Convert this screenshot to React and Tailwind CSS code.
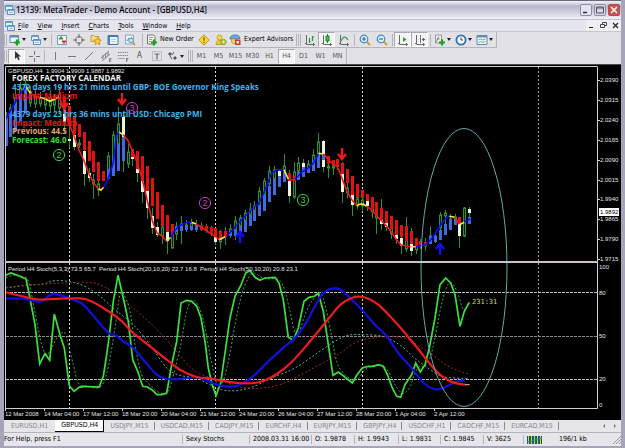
import React from "react";

const UI = "font-['DejaVu_Sans_Condensed','Noto_Sans',sans-serif]";

/* ---------- chart data ---------- */

const barX = (i) => 5.6 + 4.88 * i;

// index, top, bottom, tone (b = rising, r = falling)
const HISTOGRAM = [
  [0, 119, 146, "b"], [1, 111, 137, "b"], [2, 102, 131, "b"], [3, 94, 121, "b"], [4, 89, 113, "b"],
  [5, 91, 100, "b"], [12, 99, 114, "r"], [13, 106, 126, "r"], [14, 116, 134, "r"], [15, 124, 137, "r"],
  [16, 132, 150, "r"], [17, 141, 161, "r"], [18, 151, 172, "r"], [19, 162, 181, "r"], [20, 171, 181, "r"],
  [21, 169, 179, "b"], [22, 157, 176, "b"], [23, 144, 171, "b"], [24, 137, 161, "b"], [26, 149, 157, "r"],
  [27, 151, 169, "r"], [28, 156, 181, "r"], [29, 166, 191, "r"], [30, 178, 206, "r"], [31, 192, 219, "r"],
  [32, 205, 226, "r"], [33, 215, 232, "r"], [34, 224, 236, "r"], [35, 226, 232, "b"], [36, 224, 231, "b"],
  [37, 225, 230, "b"], [38, 226, 230, "b"], [39, 225, 230, "b"], [40, 226, 230, "r"], [41, 226, 231, "r"],
  [42, 227, 234, "r"], [43, 228, 237, "r"], [44, 231, 239, "r"], [45, 231, 237, "r"], [46, 231, 236, "b"],
  [47, 230, 236, "b"], [48, 226, 234, "b"], [49, 220, 232, "b"], [50, 215, 226, "b"], [51, 210, 221, "b"],
  [52, 205, 216, "b"], [53, 195, 211, "b"], [54, 186, 202, "b"], [55, 179, 195, "b"], [56, 176, 187, "b"],
  [57, 172, 182, "b"], [58, 173, 181, "r"], [59, 176, 181, "r"], [60, 172, 180, "b"], [61, 167, 177, "b"],
  [62, 167, 173, "b"], [63, 160, 171, "b"], [64, 154, 168, "b"], [65, 154, 160, "b"], [66, 156, 164, "r"],
  [67, 160, 166, "r"], [68, 159, 167, "r"], [69, 163, 174, "r"], [70, 169, 183, "r"], [71, 176, 195, "r"],
  [72, 184, 198, "r"], [73, 190, 198, "r"], [74, 194, 201, "r"], [75, 197, 209, "r"], [76, 202, 215, "r"],
  [77, 208, 220, "r"], [78, 211, 223, "r"], [79, 216, 229, "r"], [80, 220, 235, "r"], [81, 225, 237, "r"],
  [82, 226, 241, "r"], [83, 231, 244, "r"], [84, 238, 246, "r"], [85, 241, 246, "r"], [86, 242, 246, "r"],
  [87, 236, 244, "b"], [88, 236, 242, "b"], [89, 230, 240, "b"], [90, 224, 235, "b"], [91, 219, 230, "b"],
  [92, 217, 225, "b"], [93, 217, 224, "r"], [95, 217, 224, "b"],
];

// index, high, body top, body bottom, low, kind (u = hollow rising, d = filled falling)
const CANDLES = [
  [0, 112, 116, 124, 130, "u"], [1, 104, 108, 116, 122, "u"], [2, 90, 98, 106, 110, "u"], [3, 82, 88, 98, 104, "u"],
  [4, 80, 84, 92, 98, "u"], [5, 86, 94, 103, 107, "u"], [6, 90, 96, 104, 108, "u"], [7, 92, 98, 104, 107, "u"],
  [8, 94, 98, 105, 110, "u"], [9, 90, 98, 106, 113, "u"], [10, 94, 100, 105, 111, "u"], [11, 88, 94, 108, 114, "u"],
  [12, 96, 107, 122, 134, "d"], [13, 112, 139, 141, 148, "d"], [14, 130, 135, 147, 150, "d"], [15, 139, 143, 145, 148, "u"],
  [16, 146, 151, 174, 186, "d"], [17, 168, 173, 178, 182, "d"], [18, 174, 180, 184, 199, "u"], [19, 178, 184, 190, 196, "u"],
  [21, 152, 156, 172, 176, "u"], [22, 131, 135, 158, 161, "u"], [23, 107, 124, 144, 148, "u"], [24, 112, 117, 141, 172, "d"],
  [25, 144, 152, 164, 168, "u"], [26, 150, 154, 159, 166, "d"], [27, 160, 168, 173, 182, "d"], [28, 172, 177, 192, 203, "d"],
  [29, 188, 191, 208, 219, "d"], [30, 208, 216, 228, 234, "d"], [31, 222, 227, 235, 237, "d"], [32, 222, 227, 236, 244, "u"],
  [33, 229, 232, 241, 254, "d"], [34, 228, 231, 248, 249, "u"], [35, 222, 228, 234, 240, "u"], [36, 216, 224, 228, 244, "u"],
  [37, 220, 225, 228, 232, "u"], [38, 219, 223, 227, 231, "u"], [39, 220, 225, 228, 232, "u"], [40, 222, 226, 229, 231, "u"],
  [41, 224, 227, 230, 233, "u"], [42, 226, 229, 232, 236, "u"], [43, 230, 234, 242, 245, "d"], [44, 230, 234, 242, 249, "u"],
  [45, 227, 232, 236, 245, "u"], [46, 224, 229, 234, 238, "u"], [47, 216, 221, 230, 240, "u"], [48, 215, 218, 226, 236, "u"],
  [49, 210, 213, 221, 224, "u"], [50, 203, 209, 215, 220, "u"], [51, 201, 206, 211, 214, "u"], [52, 187, 191, 206, 208, "u"],
  [53, 178, 181, 194, 200, "u"], [54, 166, 171, 184, 188, "u"], [55, 166, 170, 179, 184, "u"], [56, 169, 171, 176, 180, "d"],
  [57, 154, 166, 171, 176, "u"], [58, 170, 179, 196, 203, "d"], [59, 162, 172, 197, 199, "u"], [60, 157, 163, 171, 174, "u"],
  [61, 159, 163, 168, 175, "d"], [62, 160, 164, 168, 172, "u"], [63, 149, 155, 166, 170, "u"], [64, 133, 142, 156, 164, "u"],
  [65, 140, 141, 167, 172, "d"], [66, 164, 166, 168, 178, "u"], [67, 163, 166, 168, 175, "u"], [68, 159, 163, 166, 170, "u"],
  [69, 162, 174, 192, 203, "d"], [70, 182, 188, 193, 198, "u"], [71, 192, 195, 205, 216, "d"], [72, 196, 199, 206, 209, "u"],
  [73, 196, 200, 206, 210, "u"], [74, 196, 200, 206, 211, "d"], [75, 202, 207, 212, 218, "u"], [76, 208, 213, 218, 234, "u"],
  [77, 199, 217, 224, 230, "d"], [78, 218, 223, 227, 231, "d"], [79, 224, 228, 234, 239, "u"], [80, 228, 232, 239, 244, "d"],
  [81, 236, 238, 246, 254, "d"], [82, 217, 240, 249, 252, "u"], [83, 228, 241, 251, 256, "d"], [84, 242, 245, 250, 254, "u"],
  [85, 239, 243, 246, 249, "u"], [86, 238, 243, 246, 251, "u"], [87, 226, 236, 240, 244, "u"], [88, 232, 236, 240, 243, "u"],
  [89, 212, 215, 228, 234, "u"], [90, 210, 213, 216, 226, "u"], [91, 214, 219, 223, 228, "u"], [92, 214, 217, 220, 224, "u"],
  [93, 218, 224, 236, 248, "d"], [94, 207, 208, 236, 237, "u"], [95, 207, 209, 213, 222, "d"],
];

// Curve samples are stored in thirds of a pixel relative to their pane.
const line = (points, originY) =>
  points.map(([x, y], i) => `${i ? "L" : "M"}${(x / 3).toFixed(1)} ${(originY + y / 3).toFixed(1)}`).join("");

const curve = (points, originY) => {
  const p = points.map(([x, y]) => [x / 3, originY + y / 3]);
  let d = `M${p[0][0].toFixed(1)} ${p[0][1].toFixed(1)}`;
  for (let i = 0; i < p.length - 1; i++) {
    const a = p[Math.max(i - 1, 0)], b = p[i], c = p[i + 1], e = p[Math.min(i + 2, p.length - 1)];
    const n = [b[0] + (c[0] - a[0]) / 6, b[1] + (c[1] - a[1]) / 6, c[0] - (e[0] - b[0]) / 6, c[1] - (e[1] - b[1]) / 6, c[0], c[1]];
    d += `C${n.map((v) => v.toFixed(1)).join(" ")}`;
  }
  return d;
};

const BLUE = "#0a0af5", RED = "#f01818", YELLOW = "#f5ee30";

const AVERAGE = [
  [BLUE, [[17, 165], [40, 125], [60, 90], [78, 70]]],
  [YELLOW, [[78, 70], [92, 88]]],
  [RED, [[92, 88], [106, 97], [120, 100]]],
  [YELLOW, [[120, 100], [135, 104], [150, 112], [165, 104], [178, 100]]],
  [RED, [[178, 100], [190, 130], [207, 180], [222, 215], [237, 258], [252, 290], [267, 330], [281, 358], [296, 375]]],
  [YELLOW, [[296, 375], [303, 378], [311, 370]]],
  [BLUE, [[311, 370], [325, 345], [340, 295], [350, 212], [358, 205]]],
  [YELLOW, [[358, 205], [370, 212]]],
  [RED, [[370, 212], [384, 230], [398, 262], [413, 300], [428, 350], [442, 410], [457, 470], [471, 507], [485, 515], [500, 532]]],
  [YELLOW, [[500, 532], [512, 520]]],
  [BLUE, [[512, 520], [522, 503], [535, 487], [560, 475], [575, 475]]],
  [YELLOW, [[575, 475], [588, 480]]],
  [RED, [[588, 480], [615, 497], [645, 517], [658, 527]]],
  [YELLOW, [[658, 527], [675, 518]]],
  [BLUE, [[680, 516], [705, 490], [730, 462], [755, 435], [775, 420], [790, 390], [800, 365], [815, 327], [830, 317], [852, 317]]],
  [YELLOW, [[852, 317], [865, 345]]],
  [RED, [[865, 347], [885, 348]]],
  [BLUE, [[885, 346], [905, 325], [925, 312], [940, 298], [955, 270]]],
  [YELLOW, [[955, 268], [970, 270]]],
  [RED, [[970, 270], [990, 292], [1012, 308], [1027, 345], [1042, 385], [1056, 408], [1071, 425]]],
  [YELLOW, [[1071, 425], [1078, 421], [1090, 420], [1100, 427]]],
  [RED, [[1100, 427], [1115, 438], [1130, 455], [1159, 485], [1174, 505], [1188, 525], [1203, 543], [1232, 548]]],
  [YELLOW, [[1232, 548], [1247, 548]]],
  [BLUE, [[1247, 548], [1263, 545], [1275, 543], [1290, 530], [1305, 510], [1320, 485], [1335, 465], [1348, 457]]],
  [YELLOW, [[1348, 457], [1364, 460]]],
  [RED, [[1364, 460], [1378, 480]]],
  [YELLOW, [[1378, 482], [1393, 475]]],
  [BLUE, [[1393, 473], [1411, 465]]],
];

const STOCH_FAST = [[17, 52], [33, 45], [60, 55], [78, 63], [85, 95], [105, 200], [119, 318], [135, 287], [149, 307], [163, 168], [180, 230], [193, 270], [208, 383], [222, 400], [237, 388], [252, 385], [297, 387], [310, 355], [320, 290], [327, 240], [340, 130], [354, 52], [370, 120], [385, 190], [398, 305], [413, 340], [428, 385], [442, 387], [455, 395], [471, 410], [485, 410], [500, 405], [515, 320], [530, 250], [543, 135], [560, 127], [575, 130], [590, 145], [603, 180], [615, 250], [625, 330], [635, 375], [648, 413], [662, 375], [677, 270], [690, 180], [705, 115], [722, 83], [737, 45], [750, 38], [765, 58], [780, 67], [795, 60], [825, 58], [837, 75], [850, 125], [865, 238], [880, 247], [895, 210], [912, 130], [927, 118], [943, 115], [955, 105], [970, 160], [985, 260], [999, 352], [1015, 342], [1028, 352], [1057, 375], [1070, 352], [1087, 330], [1105, 325], [1120, 325], [1135, 320], [1150, 325], [1163, 352], [1177, 390], [1190, 415], [1202, 418], [1215, 380], [1235, 350], [1247, 315], [1261, 342], [1275, 320], [1288, 270], [1305, 180], [1320, 80], [1337, 60], [1352, 75], [1365, 110], [1380, 205], [1393, 160], [1408, 133]];

const STOCH_FAST_SIGNAL = [[17, 60], [40, 52], [60, 55], [85, 70], [110, 190], [125, 260], [140, 290], [155, 270], [170, 240], [185, 225], [195, 225], [205, 260], [220, 320], [235, 375], [260, 385], [300, 387], [322, 340], [345, 210], [360, 110], [372, 112], [390, 160], [405, 260], [425, 350], [445, 375], [470, 400], [500, 405], [515, 370], [540, 270], [560, 160], [575, 130], [590, 135], [610, 185], [630, 290], [648, 370], [665, 380], [685, 310], [705, 200], [725, 110], [745, 60], [760, 45], [795, 62], [830, 62], [850, 85], [870, 160], [885, 225], [900, 215], [915, 170], [935, 130], [960, 105], [975, 140], [990, 210], [1010, 310], [1030, 345], [1055, 365], [1075, 362], [1095, 335], [1125, 322], [1145, 322], [1165, 340], [1185, 380], [1205, 405], [1220, 400], [1232, 382], [1245, 345], [1260, 325], [1275, 325], [1290, 300], [1305, 240], [1320, 160], [1335, 100], [1348, 75], [1360, 80], [1375, 110], [1390, 155], [1408, 135]];

const STOCH_MID = [[17, 122], [70, 122], [105, 130], [125, 130], [145, 115], [163, 107], [190, 115], [220, 125], [250, 140], [290, 185], [325, 225], [345, 232], [370, 250], [400, 270], [430, 305], [470, 350], [500, 363], [550, 362], [590, 357], [620, 367], [645, 378], [675, 385], [705, 385], [735, 372], [765, 350], [805, 310], [855, 265], [885, 240], [915, 200], [945, 145], [965, 110], [985, 95], [1003, 91], [1020, 94], [1045, 115], [1085, 155], [1125, 200], [1160, 235], [1195, 285], [1230, 325], [1250, 350], [1275, 378], [1305, 394], [1330, 390], [1360, 375], [1395, 365]];

const STOCH_MID_SIGNAL = [[17, 90], [80, 82], [130, 78], [165, 68], [215, 72], [260, 88], [300, 115], [345, 155], [400, 200], [450, 260], [500, 330], [540, 352], [590, 360], [625, 378], [665, 395], [705, 398], [755, 388], [815, 360], [885, 330], [945, 290], [1005, 250], [1045, 232], [1095, 230], [1155, 237], [1205, 265], [1240, 297], [1270, 320], [1310, 348], [1340, 358], [1408, 362]];

const STOCH_SLOW = [[17, 103], [60, 113], [110, 124], [160, 123], [240, 121], [270, 128], [310, 150], [360, 185], [400, 225], [450, 265], [500, 305], [540, 335], [590, 357], [630, 361], [665, 368], [715, 375], [765, 375], [795, 367], [835, 345], [875, 312], [915, 268], [955, 220], [995, 170], [1025, 137], [1055, 120], [1077, 116], [1105, 122], [1135, 140], [1175, 180], [1215, 225], [1260, 280], [1290, 318], [1320, 350], [1350, 370], [1380, 378], [1396, 380]];

const STOCH_SLOW_SIGNAL = [[17, 88], [100, 80], [200, 75], [270, 73], [310, 85], [350, 110], [400, 150], [450, 195], [500, 245], [550, 305], [590, 342], [630, 358], [675, 372], [725, 388], [785, 390], [845, 378], [925, 338], [1005, 295], [1065, 255], [1125, 238], [1175, 235], [1215, 240], [1240, 254], [1290, 285], [1340, 322], [1380, 340], [1408, 348]];

const PRICES = ["2.0390", "2.0315", "2.0240", "2.0165", "2.0090", "2.0015", "1.9940", "1.9865", "1.9790", "1.9715"];
const DATES = ["12 Mar 2008", "14 Mar 04:00", "17 Mar 12:00", "18 Mar 20:00", "20 Mar 04:00", "21 Mar 12:00", "24 Mar 20:00", "26 Mar 04:00", "27 Mar 12:00", "28 Mar 20:00", "1 Apr 04:00", "2 Apr 12:00"];

const EVENTS = [
  ["FOREX FACTORY CALENDAR", 81, "#f4f4f4"],
  ["4379 days 19 hrs 21 mins until GBP: BOE Governor King Speaks", 90, "#3fb4ea"],
  ["Impact: Medium", 99, "#e01818"],
  ["4379 days 23 hrs 36 mins until USD: Chicago PMI", 117, "#3fb4ea"],
  ["Impact: Medium", 126, "#e01818"],
  ["Previous: 44.5", 134, "#e0a070"],
  ["Forecast: 46.0", 143, "#28e028"],
];

const WAVES = [["2", 59, 155, "#3ccf4c"], ["3", 132, 108, "#c838c8"], ["2", 205, 203, "#c838c8"], ["3", 303, 200, "#3ccf4c"]];

function Marker({ x, y, up, color }) {
  const s = up ? -1 : 1;
  return (
    <path
      d={`M${x} ${y - 6 * s}V${y + 4 * s}M${x - 4} ${y}L${x} ${y + 5 * s}L${x + 4} ${y}`}
      stroke={color} strokeWidth="2.4" fill="none"
    />
  );
}

function Chart() {
  return (
    <svg viewBox="4 64 617 356" className="block h-auto w-full bg-black font-['Liberation_Sans',sans-serif]" role="img" aria-label="GBPUSD H4 chart">
      <rect x="4" y="64" width="617" height="1" fill="#4a4a4a" />
      <g stroke="#d8d8d8" strokeDasharray="2 2">
        <path d="M69.5 67V408M215.5 67V408M362.5 67V408" />
        <path d="M538.5 67V408" stroke="#a0a0a0" />
        <path d="M6 292.5H597M6 379.5H597" strokeDasharray="3 1" stroke="#c0c0c0" />
        <path d="M6 336.5H597" strokeDasharray="3 1" stroke="#8a8a8a" />
      </g>

      <text x="8" y="73" fontSize="6" fill="#e4e4e4">GBPUSD,H4&nbsp; 1.9904 1.9909 1.9887 1.9892</text>

      {CANDLES.map(([i, hi, top, bot, lo, kind]) => {
        const x = Math.round(barX(i));
        return (
          <g key={i}>
            <path d={`M${x + 0.5} ${hi}V${lo}`} stroke="#2f8f35" />
            {kind === "u"
              ? <rect x={x - 0.5} y={top} width="2" height={bot - top} fill="#0a200a" stroke="#2f8f35" />
              : <rect x={x - 1} y={top} width="3" height={bot - top} fill="#e2f8dc" />}
          </g>
        );
      })}
      {HISTOGRAM.map(([i, top, bot, tone]) => (
        <rect key={i} x={Math.round(barX(i)) - 1} y={top} width="3" height={bot - top} fill={tone === "b" ? "#3f6ae0" : "#e01212"} />
      ))}
      <g fill="none" strokeWidth="1.6">
        {AVERAGE.map(([color, pts], i) => <path key={i} d={line(pts, 64)} stroke={color} />)}
      </g>

      <Marker x={122} y={99} color="#f01818" />
      <Marker x={64} y={103} color="#f01818" />
      <Marker x={342} y={154} color="#f01818" />
      <Marker x={240} y={237} color="#1010f0" up />
      <Marker x={440} y={249} color="#1010f0" up />

      {EVENTS.map(([label, y, color], i) => (
        <text key={i} x="12" y={y} fontSize="8" fontWeight="700" fill={color} className="font-['Open_Sans',sans-serif]">{label}</text>
      ))}
      {WAVES.map(([n, x, y, color], i) => (
        <g key={i}>
          <circle cx={x} cy={y} r="5.6" fill="none" stroke={color} />
          <text x={x} y={y + 3} fontSize="9" textAnchor="middle" fill={color}>{n}</text>
        </g>
      ))}

      <g fill="none">
        <path d={curve(STOCH_MID_SIGNAL, 258)} stroke="#5fa9a4" strokeDasharray="2 2" />
        <path d={curve(STOCH_SLOW_SIGNAL, 258)} stroke="#a02525" strokeDasharray="2 2" />
        <path d={curve(STOCH_FAST_SIGNAL, 258)} stroke="#4f9f55" strokeDasharray="2 2" />
        <path d={line(STOCH_FAST, 258)} stroke="#3ce03c" strokeWidth="1.7" />
        <path d={curve(STOCH_MID, 258)} stroke="#1010e0" strokeWidth="2.2" />
        <path d={curve(STOCH_SLOW, 258)} stroke="#f01c1c" strokeWidth="2.2" />
        <path d="M465 384.7H469.500" stroke="#e8c0b0" />
        <ellipse cx="464" cy="267.500" rx="43" ry="139" stroke="#65aaa6" />
      </g>
      <text x="472" y="304" fontSize="7" fill="#d8d870" className="font-['DejaVu_Sans_Mono',monospace]">231:31</text>
      <text x="8" y="271" fontSize="6" fill="#e4e4e4">
        Period H4 Stoch(5,3,3) 73.5 65.7&nbsp; Period H4 Stoch(20,10,20) 22.7 16.8&nbsp; Period H4 Stoch(50,10,20) 20.8 23.1
      </text>

      <path d="M5.500 408V66.500H597.500V408.500H5.500" fill="none" stroke="#d0d0d0" />
      <path d="M5 262H598" stroke="#c9c3c9" strokeWidth="2" />

      <g fontSize="6" fill="#e4e4e4">
        {PRICES.map((p, i) => (
          <g key={p}>
            <path d={`M598 ${Math.round(80 + 19.9 * i) + 0.5}h2`} stroke="#d0d0d0" />
            <text x="600" y={Math.round(82 + 19.9 * i)}>{p}</text>
          </g>
        ))}
        <rect x="599" y="208" width="20" height="8" fill="#fff" />
        <text x="600" y="214" fill="#000">1.9892</text>
        <text x="599" y="269">100</text>
        <text x="599" y="295">80</text>
        <text x="599" y="338">50</text>
        <text x="599" y="381">20</text>
        <text x="599" y="407">0</text>
        {DATES.map((d, i) => (
          <g key={d}>
            <path d={`M${5.5 + 39 * i} 408v3`} stroke="#d0d0d0" />
            <text x={5 + 39 * i} y="416">{d}</text>
          </g>
        ))}
      </g>
    </svg>
  );
}

/* ---------- icons ---------- */

const Icon = ({ children }) => (
  <svg viewBox="0 0 12 12" className="size-3 shrink-0" fill="none" aria-hidden="true">{children}</svg>
);

const Plus = () => <path d="M8 5.500V11.500M5 8.500H11" stroke="#18a018" strokeWidth="2.200" />;

const WindowsIcon = () => (
  <Icon>
    <path d="M1.500 1.500h7v5h-7zM3.500 5.500h7v5h-7z" fill="#e6f2fb" stroke="#5c93be" />
    <path d="M1 2.500h8M3 6.500h8" stroke="#6ba3d0" />
    <path d="M5 8.500h4" stroke="#9cc" />
  </Icon>
);
const NewChartIcon = () => (
  <Icon><path d="M1 1.500h8.500v7H1z" fill="#eef6fc" stroke="#5a8ab0" /><path d="M1 2.500h8.500" stroke="#5a8ab0" strokeWidth="2" /><Plus /></Icon>
);
const MarketIcon = () => (
  <Icon>
    <path d="M1.500 1.500h9v9h-9z" fill="#f4fafd" stroke="#6f9dbd" />
    <path d="M3 5l2-2.500 2 2.500z" fill="#20a030" stroke="#20a030" />
    <path d="M6 7h4l-2 2.500z" fill="#d03020" stroke="#d03020" />
  </Icon>
);
const NavigatorIcon = () => (
  <Icon><circle cx="6" cy="6" r="3.500" stroke="#777" /><path d="M6 0v4M6 8v4M0 6h4M8 6h4" stroke="#666" /></Icon>
);
const StarIcon = () => (
  <Icon>
    <path d="M1 1.500h3l1 1h4v5H1z" fill="#f6dc7a" stroke="#b89430" strokeWidth=".8" />
    <path d="M7.500 3.500l1.200 2.400 2.700.3-2 1.800.6 2.800-2.500-1.400-2.500 1.400.6-2.800-2-1.800 2.700-.3z" fill="#fbd02c" stroke="#b8861c" strokeWidth=".7" />
  </Icon>
);
const TerminalIcon = () => (
  <Icon><path d="M1 1.500h10v9H1z" fill="#eef6fd" stroke="#3f7cb5" /><path d="M1 2h10M2 3v7" stroke="#3f7cb5" strokeWidth="1.800" /><path d="M4 5.500h5M4 7.500h5" stroke="#b6cfe4" /></Icon>
);
const TesterIcon = () => (
  <Icon>
    <path d="M1.500 1h8v9h-8z" fill="#e8f1f8" stroke="#8aa9c0" /><path d="M3 7l2-3 1 2 2-3" stroke="#5a90b8" />
    <circle cx="7" cy="6.500" r="2.300" fill="#cfe6f6" stroke="#5c93bb" /><path d="M8.700 8.500L11 11" stroke="#c8902c" strokeWidth="1.600" />
  </Icon>
);
const OrderIcon = () => (
  <Icon><path d="M1.500 1h6l1.500 1.500V10H1.500z" fill="#f5f5f0" stroke="#777" /><path d="M3 3.500h4M3 5.500h3M3 7.500h2" stroke="#999" /><Plus /></Icon>
);
const WarnIcon = () => (
  <Icon><path d="M6 .8L11.200 6 6 11.200.8 6z" fill="#fbd83c" stroke="#c09418" /><path d="M6 3.200v3.500M6 7.800v1.300" stroke="#6a4d08" strokeWidth="1.200" /></Icon>
);
const RobotIcon = () => (
  <Icon>
    <circle cx="4.500" cy="3.500" r="2.500" fill="#f8d648" stroke="#b8921c" strokeWidth=".8" />
    <path d="M1 10.500c0-3 1.500-4 3.500-4s3.500 1 3.500 4z" fill="#f0c82c" stroke="#b8921c" strokeWidth=".8" />
    <circle cx="8.500" cy="8" r="2.700" fill="#b8cc38" stroke="#7a9a20" strokeWidth=".8" /><circle cx="8.500" cy="8" r="1" fill="#f8f8d0" />
  </Icon>
);
const ExpertIcon = () => (
  <Icon>
    <path d="M1 5c0-3 2-4 5-4s5 1 5 3.500z" fill="#5fb0dc" stroke="#2f7aa8" strokeWidth=".8" />
    <path d="M2.500 5h6v3c0 2-5 2.500-6 0z" fill="#f6d060" stroke="#b8902c" strokeWidth=".7" />
    <path d="M6 5.500h5.500V11H6z" fill="#d83424" /><path d="M7.500 7h2.500v2.500H7.500z" fill="#fff" />
  </Icon>
);
const Axes = () => <path d="M2.500 1v9.500H11M1 9.500h2M9.500 9v3" stroke="#6a6a6a" />;
const BarsIcon = () => <Icon><Axes /><path d="M5.500 4v5M5 7.500h1.500M8.500 2v5M8.500 3h1.500" stroke="#2a9a35" strokeWidth="1.200" /></Icon>;
const CandlesIcon = () => <Icon><Axes /><path d="M6.500 0v9" stroke="#178a20" /><path d="M5 2h3v5H5z" fill="#3cc848" stroke="#178a20" /></Icon>;
const LineIcon = () => <Icon><Axes /><path d="M3 7c2-5 5-5 7-1" stroke="#3aa048" strokeWidth="1.200" /></Icon>;
const ZoomIcon = ({ plus }) => (
  <Icon>
    <path d="M7.500 7.500L11 11" stroke="#d0a02c" strokeWidth="2" />
    <circle cx="5" cy="5" r="3.800" fill="#dcefff" stroke="#4488c4" strokeWidth="1.200" />
    <path d={plus ? "M3 5h4M5 3v4" : "M3 5h4"} stroke="#2a6cb0" strokeWidth="1.200" />
  </Icon>
);
const ScrollIcon = () => <Icon><Axes /><path d="M6 3l3.500 2.500L6 8z" fill="#22a035" /></Icon>;
const ShiftIcon = () => <Icon><Axes /><path d="M6.500 1v8" stroke="#777" /><path d="M8 5.500h3M9.500 4v3" stroke="#22803a" strokeWidth="1.200" /></Icon>;
const IndicatorIcon = () => (
  <Icon><path d="M1.500 1h6v8h-6z" fill="#ececec" stroke="#999" /><path d="M5 3c-2 0-1.500 5-3 5M3 5h2.500" stroke="#666" strokeWidth=".8" /><Plus /></Icon>
);
const ClockIcon = () => <Icon><circle cx="6" cy="6" r="4.600" fill="#f4faff" stroke="#2a72b8" strokeWidth="1.800" /><path d="M6 3.500V6h2" stroke="#345" /></Icon>;
const TemplateIcon = () => <Icon><path d="M1 1.500h10v9H1z" fill="#f2f8fc" stroke="#5a8fb8" /><path d="M1 2.500h10" stroke="#5a8fb8" strokeWidth="2" /><path d="M2.500 6l2-1 2 1 3-1M2.500 8.500l2-1 2 1 3-1" stroke="#7a9a7a" strokeWidth=".9" /></Icon>;

const CursorIcon = () => <Icon><path d="M4 1v8l2-1.800 1.300 3 1.400-.6-1.300-3H10z" fill="#333" /></Icon>;
const CrosshairIcon = () => <Icon><path d="M6.500 1v4M6.500 8v4M1 6.500h4M8 6.500h4" stroke="#777" /></Icon>;
const VLineIcon = () => <Icon><path d="M6.500 2v8" stroke="#777" /></Icon>;
const HLineIcon = () => <Icon><path d="M2 6.500h8" stroke="#777" /></Icon>;
const TrendIcon = () => <Icon><path d="M2 10l8-8" stroke="#777" /></Icon>;
const ChannelIcon = () => <Icon><path d="M1 8l8-7M2 11l8-7M3 5v4M5.500 3v5M8 2v4" stroke="#777" strokeWidth=".9" /><path d="M11.500 8.500H9.500V12h2M9.500 10h1.500" stroke="#666" strokeWidth=".8" /></Icon>;
const FiboIcon = () => <Icon><path d="M1 2.500h10M1 5.500h10M1 8.500h7" stroke="#888" strokeDasharray="1.500 .7" /><path d="M11.500 8.500H9.500V12M9.500 10h1.500" stroke="#666" strokeWidth=".8" /></Icon>;
const LabelIcon = () => <Icon><path d="M1.500 1.500h9v9h-9z" stroke="#999" strokeDasharray="1 1" /><path d="M3.500 4h5M6 4v5.500" stroke="#666" strokeWidth="1.200" /></Icon>;
const ArrowsIcon = () => <Icon><path d="M1 4l2-2 2 2-2 2zM6 8l2-2 2 2-2 2z" fill="#555" /><path d="M3 6l2 3M7 2L5 5" stroke="#555" /></Icon>;

const Caret = () => (
  <svg viewBox="0 0 4 3" className="h-[3px] w-1 shrink-0" aria-hidden="true"><path d="M0 0h4L2 3z" fill="#222" /></svg>
);

/* ---------- window chrome ---------- */

function Tool({ label, width = "w-[17px]", pressed, caret, children }) {
  return (
    <button
      type="button" aria-label={label} aria-pressed={pressed}
      className={`flex h-[15px] shrink-0 items-center justify-center gap-px border ${width} ${pressed ? "border-[#a9a9b0] border-r-white border-b-white bg-[#f4f4f6]" : "border-transparent"}`}
    >
      {children}
      {caret && <Caret />}
    </button>
  );
}

const Divider = ({ width = "w-1" }) => (
  <span className={`flex h-3 shrink-0 justify-center ${width}`}><span className="w-px bg-[#b4b4bc]" /></span>
);
const Grip = () => <span className="h-3 w-[3px] shrink-0 border-x border-[#b4b4bc]" />;

const MENU = ["File", "View", "Insert", "Charts", "Tools", "Window", "Help"];
const FRAMES = ["M1", "M5", "M15", "M30", "H1", "H4", "D1", "W1", "MN"];
const TABS = ["EURUSD,H1", "GBPUSD,H4", "USDJPY,M15", "USDCAD,M15", "CADJPY,M15", "EURCHF,H4", "EURJPY,M15", "GBPJPY,H4", "USDCHF,H1", "CADCHF,M15", "EURCAD,M15"];

function TitleBar() {
  const frame = "flex size-3 items-center justify-center rounded-xs border";
  return (
    <header className="flex h-[19px] items-center border-t border-[#6b6a7c] bg-linear-to-b from-[#f4f4fa] via-[#b7b6cd] via-30% to-[#f0f0f6]">
      <WindowsIcon />
      <h1 className="flex-1 text-[8px] leading-3 font-medium whitespace-nowrap text-black font-['Noto_Sans',sans-serif]">13139: MetaTrader - Demo Account - [GBPUSD,H4]</h1>
      <div className="flex gap-0.5 pr-px">
        <button type="button" aria-label="Minimize" className={`${frame} border-[#8c8ca6] bg-[#e4e4ee]`}>
          <svg viewBox="0 0 10 10" className="size-2.5"><path d="M2 7.500h4" stroke="#333" strokeWidth="1.500" /></svg>
        </button>
        <button type="button" aria-label="Maximize" className={`${frame} border-[#8c8ca6] bg-[#d4d4e2]`}>
          <svg viewBox="0 0 10 10" className="size-2.5" fill="none"><path d="M1.500 2h7v6h-7zM1.500 3h7" stroke="#555566" /></svg>
        </button>
        <button type="button" aria-label="Close" className={`${frame} border-[#a05050] bg-[#d0504c]`}>
          <svg viewBox="0 0 10 10" className="size-2.5"><path d="M2 2l6 6M8 2L2 8" stroke="#fff" strokeWidth="1.500" /></svg>
        </button>
      </div>
    </header>
  );
}

function MenuBar() {
  return (
    <nav className="flex h-3 items-center border-t border-[#c2c2cc] bg-[#e4e5ef]">
      <WindowsIcon />
      <div className="flex flex-1 gap-[9px] pl-[2px]">
        {MENU.map((m) => (
          <button key={m} type="button" className="text-[7px] leading-[10px] text-black"><u>{m[0]}</u>{m.slice(1)}</button>
        ))}
      </div>
      <div className="flex gap-px">
        <button type="button" aria-label="Minimize chart" className="size-[11px] bg-[#f0f0f4]">
          <svg viewBox="0 0 11 11"><path d="M3 7.500h4" stroke="#222" /></svg>
        </button>
        <button type="button" aria-label="Restore chart" className="size-[11px] bg-[#f0f0f4]">
          <svg viewBox="0 0 11 11" fill="none"><path d="M4.500 4V2.500h4v3H7M2.500 4.500h4v3h-4z" stroke="#444" /></svg>
        </button>
        <button type="button" aria-label="Close chart" className="size-[11px] bg-[#f0f0f4]">
          <svg viewBox="0 0 11 11"><path d="M3 3l5 5M8 3L3 8" stroke="#222" strokeWidth="1.200" /></svg>
        </button>
      </div>
    </nav>
  );
}

function MainToolbar() {
  return (
    <div className="flex h-[17px] border-t border-[#c6c6cc]">
      <div className="flex items-center border-r border-b border-[#b4b4bc] pr-px">
        <Grip />
        <Tool label="New chart" width="w-[21px]" caret><NewChartIcon /></Tool>
        <Tool label="Profiles" width="w-[21px]" caret><WindowsIcon /></Tool>
        <Divider />
        <Tool label="Market watch"><MarketIcon /></Tool>
        <Tool label="Data window"><NavigatorIcon /></Tool>
        <Tool label="Navigator"><StarIcon /></Tool>
        <Tool label="Terminal"><TerminalIcon /></Tool>
        <Tool label="Strategy tester"><TesterIcon /></Tool>
        <Divider width="w-2" />
        <button type="button" className="flex w-[49px] items-center gap-[2px] text-[7px] whitespace-nowrap"><OrderIcon />New Order</button>
        <Tool label="MetaEditor"><WarnIcon /></Tool>
        <Tool label="Options"><RobotIcon /></Tool>
        <button type="button" className="flex w-[65px] items-center gap-[3px] text-[7px] whitespace-nowrap"><ExpertIcon />Expert Advisors</button>
        <Divider />
        <Grip />
        <Tool label="Bar chart"><BarsIcon /></Tool>
        <Tool label="Candlesticks" pressed><CandlesIcon /></Tool>
        <Tool label="Line chart"><LineIcon /></Tool>
        <Divider />
        <Tool label="Zoom in"><ZoomIcon plus /></Tool>
        <Tool label="Zoom out"><ZoomIcon /></Tool>
        <Divider />
        <Tool label="Auto scroll" pressed><ScrollIcon /></Tool>
        <Tool label="Chart shift" pressed><ShiftIcon /></Tool>
        <Divider />
        <Tool label="Indicators" width="w-[21px]" caret><IndicatorIcon /></Tool>
        <Tool label="Periods" width="w-[21px]" caret><ClockIcon /></Tool>
        <Tool label="Templates" width="w-[21px]" caret><TemplateIcon /></Tool>
      </div>
    </div>
  );
}

function LineToolbar() {
  return (
    <div className="flex h-4">
      <div className="flex items-center border-r border-[#b4b4bc]">
        <Grip />
        <span className="w-px" />
        <Tool label="Cursor" pressed><CursorIcon /></Tool>
        <Tool label="Crosshair"><CrosshairIcon /></Tool>
        <Divider />
        <Tool label="Vertical line"><VLineIcon /></Tool>
        <Tool label="Horizontal line"><HLineIcon /></Tool>
        <Tool label="Trendline"><TrendIcon /></Tool>
        <Tool label="Equidistant channel"><ChannelIcon /></Tool>
        <Tool label="Fibonacci retracement"><FiboIcon /></Tool>
        <Tool label="Text"><span className="text-[8px] leading-3 text-[#444]">A</span></Tool>
        <Tool label="Text label"><LabelIcon /></Tool>
        <Tool label="Arrows" width="w-[21px]" caret><ArrowsIcon /></Tool>
        <Divider />
        <Grip />
        {FRAMES.map((f) => (
          <Tool key={f} label={f} pressed={f === "H4"}><span className="text-[7px] leading-3 text-[#555]">{f}</span></Tool>
        ))}
      </div>
    </div>
  );
}

function ChartTabs() {
  return (
    <div className="flex h-[13px] items-start border-b border-[#b4b4bc] bg-[#e6e6ea]">
      <div role="tablist" className="flex flex-1 items-center">
        {TABS.map((t, i) => (
          <button
            key={t} type="button" role="tab" aria-selected={i === 1}
            className={i === 1
              ? "h-3 border-r border-b border-black bg-white pr-[5px] pl-[6px] text-[7px] leading-[11px] text-black"
              : "text-[7px] leading-[11px] text-[#858585]"}
          >
            {i === 1 ? t : <span className={i === 0 ? "block px-[7px]" : "block border-r border-[#8a8a8a] pr-[5px] pl-[6px] leading-[8px]"}>{t}</span>}
          </button>
        ))}
      </div>
      <div className="flex items-center gap-[7px] pt-1 pr-1">
        <button type="button" aria-label="Scroll tabs left"><svg viewBox="0 0 4 4" className="block size-1"><path d="M3 0v4L1 2z" fill="#777" /></svg></button>
        <button type="button" aria-label="Scroll tabs right"><svg viewBox="0 0 4 4" className="block size-1"><path d="M1 0v4l2-2z" fill="#777" /></svg></button>
      </div>
    </div>
  );
}

function StatusBar() {
  const cell = "shrink-0 border-l border-[#b4b4bc] pl-[3px]";
  return (
    <footer className="flex h-[13px] items-center bg-[#e6e6ea] text-[7px] leading-[9px] whitespace-nowrap text-black">
      <span className="w-[178px] shrink-0">For Help, press F1</span>
      <span className={`${cell} w-[67px]`}>Sexy Stochs</span>
      <span className={`${cell} w-[62px]`}>2008.03.31 16:00</span>
      <span className={`${cell} w-[43px]`}>O: 1.9878</span>
      <span className={`${cell} w-[44px]`}>H: 1.9943</span>
      <span className={`${cell} w-[42px]`}>L: 1.9831</span>
      <span className={`${cell} w-[43px]`}>C: 1.9845</span>
      <span className={`${cell} w-[40px]`}>V: 3625</span>
      <span className={`${cell} flex flex-1 items-center gap-[17px]`}>
        <svg viewBox="0 0 15 8" className="h-2 w-[15px]" aria-hidden="true">
          <rect width="15" height="8" fill="#1c5a6a" />
          <path d="M1.500 0v8M4.500 0v8M7.500 0v8M10.500 0v8M13.500 0v8" stroke="#c8d838" />
          <path d="M0 6l15-4" stroke="#2a8ab0" />
        </svg>
        196/1 kb
      </span>
      <svg viewBox="0 0 9 9" className="size-[9px] shrink-0" aria-hidden="true"><path d="M1 9l8-8M4 9l5-5M7 9l2-2" stroke="#999" /></svg>
    </footer>
  );
}

export default function App() {
  return (
    <main className={`min-h-screen border-x-4 border-b-2 border-[#a5a4b8] bg-[#e2e1e6] ${UI}`}>
      <TitleBar />
      <MenuBar />
      <MainToolbar />
      <LineToolbar />
      <Chart />
      <ChartTabs />
      <StatusBar />
    </main>
  );
}
